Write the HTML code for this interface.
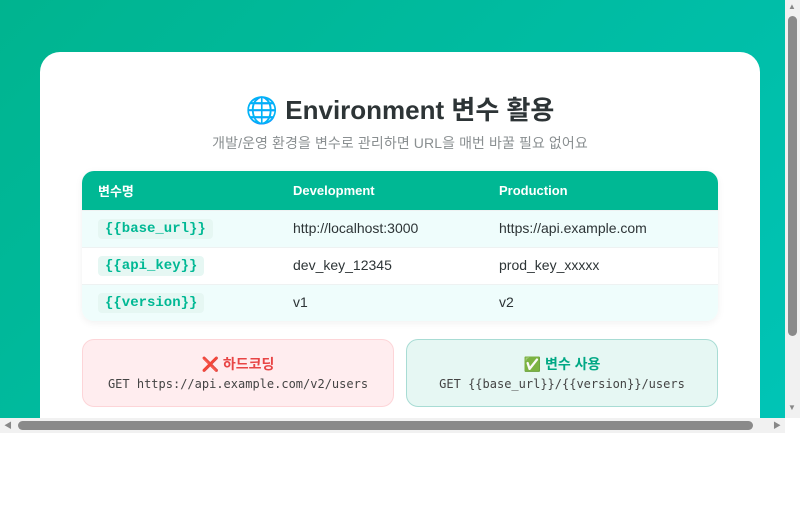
<!DOCTYPE html>
<html><head><meta charset="utf-8"><style>
*{margin:0;padding:0;box-sizing:border-box}
body{width:800px;height:520px;background:#fff;position:relative;overflow:hidden;font-family:"Liberation Sans","Noto Sans CJK KR",sans-serif}
.vp{position:absolute;left:0;top:0;width:785px;height:418px;overflow:hidden;background:linear-gradient(135deg,#00b48f,#00c4b6)}
.card{position:absolute;left:40px;top:52px;width:720px;height:420px;background:#fff;border-radius:20px}
h1{position:absolute;top:38px;left:0;width:720px;text-align:center;font-size:26px;font-weight:bold;color:#2d3436}
.sub{position:absolute;top:81px;left:0;width:720px;text-align:center;font-size:14px;color:#8a8f91;letter-spacing:0.1px}
table{position:absolute;left:42px;top:119px;width:636px;border-collapse:collapse;border-radius:12px;overflow:hidden;box-shadow:0 2px 8px rgba(0,0,0,.06)}
th{background:#00b894;color:#fff;font-size:13px;text-align:left;height:39px;padding-left:16px;font-weight:bold}
td{height:37px;padding-left:16px;font-size:14px;color:#2d3436;border-top:1px solid #eef2f2;padding-bottom:2px}
tr.o td{background:#effdfc}
th:nth-child(1),td:nth-child(1){width:195px}
th:nth-child(2),td:nth-child(2){width:206px}
code{font-family:"Liberation Mono","DejaVu Sans Mono",monospace;font-weight:bold;color:#00b894;background:#e6f7f3;padding:2px 7px;border-radius:4px;font-size:14px}
.box{position:absolute;top:287px;width:312px;height:68px;border-radius:12px;text-align:center}
.box b{display:block;margin-top:14px;font-size:14px}
.box span{display:block;margin-top:3px;font-family:"DejaVu Sans Mono",monospace;font-size:12px;color:#444}
.r{left:42px;background:#ffedef;border:1px solid #fdd5d8}.r b{color:#e84545}
.g{left:366px;background:#e6f7f3;border:1px solid #a8dcd4}.g b{color:#00a884}
.vs{position:absolute;left:785px;top:0;width:15px;height:418px;background:#f1f1f1}
.vt{position:absolute;left:788px;top:16px;width:9px;height:320px;background:#8a8a8a;border-radius:5px}
.hs{position:absolute;left:0;top:418px;width:785px;height:15px;background:#f1f1f1}
.ht{position:absolute;left:18px;top:421px;width:735px;height:9px;background:#8a8a8a;border-radius:5px}
.ar{position:absolute;font-size:8px;color:#888}
</style></head><body>
<div class="vp"><div class="card">
<h1>🌐 Environment 변수 활용</h1>
<div class="sub">개발/운영 환경을 변수로 관리하면 URL을 매번 바꿀 필요 없어요</div>
<table>
<tr><th>변수명</th><th>Development</th><th>Production</th></tr>
<tr class="o"><td><code>{{base_url}}</code></td><td>http://localhost:3000</td><td>https://api.example.com</td></tr>
<tr><td><code>{{api_key}}</code></td><td>dev_key_12345</td><td>prod_key_xxxxx</td></tr>
<tr class="o"><td><code>{{version}}</code></td><td>v1</td><td>v2</td></tr>
</table>
<div class="box r"><b>❌ 하드코딩</b><span>GET https://api.example.com/v2/users</span></div>
<div class="box g"><b>✅ 변수 사용</b><span>GET {{base_url}}/{{version}}/users</span></div>
</div></div>
<div class="vs"></div><div class="vt"></div>
<div class="hs"></div><div class="ht"></div>
<div class="ar" style="left:788px;top:2px">▲</div>
<div class="ar" style="left:788px;top:403px">▼</div>
<div class="ar" style="left:4px;top:420px">◀</div>
<div class="ar" style="left:773px;top:420px">▶</div>
</body></html>
